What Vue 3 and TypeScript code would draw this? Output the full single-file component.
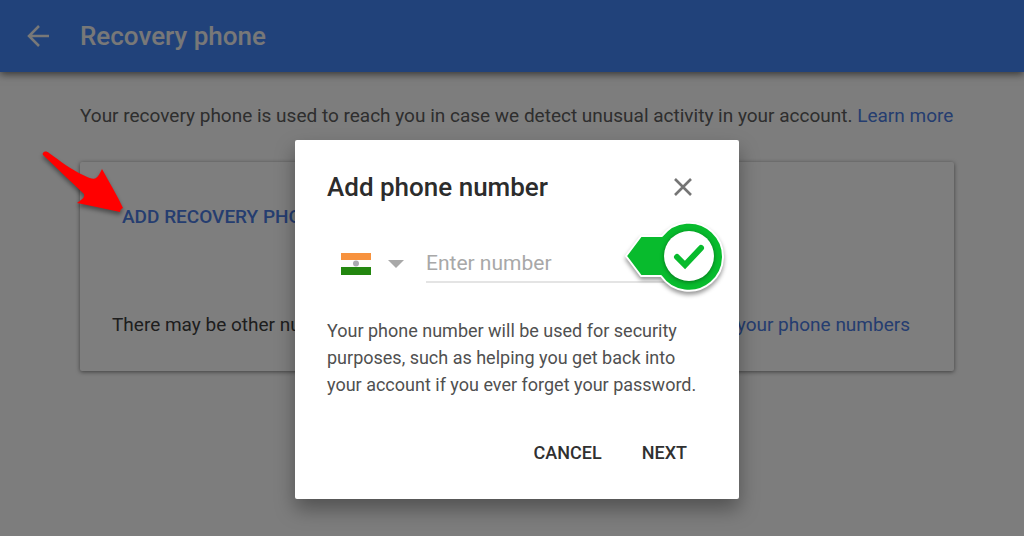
<script setup lang="ts">
import { ref } from 'vue'

const phone = ref('')
</script>

<template>
  <div class="page">
    <header class="bar">
      <button class="icon-button back" type="button" aria-label="Back">
        <svg width="24" height="24" viewBox="0 0 24 24" fill="none" stroke="currentColor" stroke-width="2.500">
          <path d="M23 12H4M13 2 3 12 13 22" />
        </svg>
      </button>
      <h1>Recovery phone</h1>
    </header>

    <main>
      <p class="intro">
        Your recovery phone is used to reach you in case we detect unusual activity in your account.
        <a href="#">Learn more</a>
      </p>
      <section class="card">
        <button class="add" type="button">ADD RECOVERY PHONE</button>
        <div class="others">
          <span>There may be other numbers</span>
          <a href="#">your phone numbers</a>
        </div>
      </section>
    </main>

    <div class="scrim">
      <form class="dialog" role="dialog" aria-labelledby="dialog-title" @submit.prevent>
        <div class="dialog-head">
          <h2 id="dialog-title">Add phone number</h2>
          <button class="icon-button close" type="button" aria-label="Close">
            <svg width="20" height="20" viewBox="0 0 20 20" fill="none" stroke="currentColor" stroke-width="2.600">
              <path d="M2 2 18 18M18 2 2 18" />
            </svg>
          </button>
        </div>

        <div class="field-row">
          <button class="country" type="button" aria-label="Country: India">
            <svg width="30" height="22" viewBox="0 0 30 22">
              <rect width="30" height="22" fill="#fcfcfc" />
              <rect width="30" height="7" fill="#f7923e" />
              <rect y="14" width="30" height="8" fill="#22860f" />
              <circle cx="15" cy="10.500" r="3" fill="#a9a9b0" />
            </svg>
            <svg width="16" height="8" viewBox="0 0 16 8"><path d="M0 0H16L8 8Z" fill="#a8a8a8" /></svg>
          </button>
          <input v-model="phone" type="tel" placeholder="Enter number" aria-label="Phone number" />
          <svg class="badge" width="112" height="88" viewBox="0 0 112 88" aria-hidden="true">
            <g class="badge-shape">
              <path
                d="M8 44 23 24H44A34 34 0 1 1 43 64H23Z"
                fill="#08bb2d"
                stroke="#fff"
                stroke-width="2"
                stroke-linejoin="round"
              />
            </g>
            <circle class="badge-disc" cx="71" cy="44" r="25" fill="#fff" />
            <path d="M59 45 67 53 83 36" fill="none" stroke="#08bb2d" stroke-width="6" stroke-linecap="round" />
          </svg>
        </div>

        <p class="note">
          Your phone number will be used for security purposes, such as helping you get back into
          your account if you ever forget your password.
        </p>

        <div class="actions">
          <button type="button">CANCEL</button>
          <button type="submit">NEXT</button>
        </div>
      </form>
    </div>

    <svg class="pointer" width="96" height="80" viewBox="0 0 96 80" aria-hidden="true">
      <path
        d="M9 11C10 9 13 9 15 11C26 19 38 28 49 33C55 36 60 38 62 36C64 35 66 31 68 27C75 40 83 53 89 66C87 67 86 68 86 70C72 67 58 64 43 61C48 57 51 56 50 52C37 40 24 27 10 14C9 13 8 12 9 11Z"
        fill="#f00"
      />
    </svg>
  </div>
</template>

<style>
body {
  margin: 0;
}
</style>

<style scoped>
.page {
  position: relative;
  min-height: 100vh;
  background: #fafafa;
  font-family: Roboto, "Liberation Sans", sans-serif;
  font-size: 19px;
  color: #3c3c3c;
}

h1,
h2,
p {
  margin: 0;
}

button {
  padding: 0;
  border: 0;
  background: none;
  font: inherit;
  color: inherit;
  cursor: pointer;
}

a {
  color: #4a7be0;
  text-decoration: none;
}

svg {
  display: block;
}

.bar {
  display: flex;
  align-items: center;
  gap: 30px;
  height: 72px;
  padding: 0 26px;
  background: #4285f4;
  box-shadow: 0 2px 8px rgba(0, 0, 0, 0.6);
  color: #f0f0f0;
}

h1 {
  font-size: 26px;
  font-weight: 500;
}

main {
  padding: 30px 70px 0 80px;
}

.intro {
  line-height: 28px;
  color: #5c5c5c;
}

.card {
  margin-top: 32px;
  padding: 41px 44px 32px 32px;
  border-radius: 2px;
  background: #fcfcfc;
  box-shadow: 0 1px 4px rgba(0, 0, 0, 0.5);
}

.add {
  display: block;
  margin-left: 10px;
  line-height: 28px;
  font-weight: 500;
  color: #4a7be0;
}

.others {
  display: flex;
  justify-content: space-between;
  margin-top: 80px;
  line-height: 28px;
}

.scrim {
  position: absolute;
  inset: 0;
  display: flex;
  align-items: center;
  justify-content: center;
  padding: 103px 0 0 10px;
  background: rgba(0, 0, 0, 0.5);
}

.dialog {
  box-sizing: border-box;
  width: 444px;
  padding: 32px;
  border-radius: 2px;
  background: #fff;
  box-shadow: 0 10px 20px rgba(0, 0, 0, 0.35);
  font-size: 18px;
}

.dialog-head {
  display: flex;
  align-items: center;
  justify-content: space-between;
  padding-right: 14px;
  line-height: 30px;
  color: #2c2c2c;
}

h2 {
  font-size: 26px;
  font-weight: 500;
}

.close {
  color: #757575;
}

.field-row {
  position: relative;
  display: flex;
  align-items: center;
  margin-top: 43px;
  padding: 0 14px;
}

.country {
  display: flex;
  align-items: center;
  gap: 17px;
}

input {
  flex: 1;
  box-sizing: border-box;
  min-width: 0;
  height: 38px;
  margin-left: 22px;
  padding: 0;
  border: 0;
  border-bottom: 2px solid #e4e4e4;
  background: none;
  font: inherit;
  font-size: 21px;
  color: #333;
  outline: none;
}

input::placeholder {
  color: #a8a8a8;
  opacity: 1;
}

.badge {
  position: absolute;
  top: -33px;
  right: -23px;
}

.badge-shape {
  filter: drop-shadow(0 3px 2px rgba(0, 0, 0, 0.4));
}

.badge-disc {
  filter: drop-shadow(0 1px 2px rgba(0, 0, 0, 0.4));
}

.note {
  margin-top: 34px;
  line-height: 27px;
  color: #505050;
}

.actions {
  display: flex;
  justify-content: flex-end;
  gap: 40px;
  margin-top: 41px;
  padding-right: 20px;
  line-height: 28px;
  font-weight: 500;
  color: #303030;
}

.pointer {
  position: absolute;
  top: 142px;
  left: 34px;
  filter: drop-shadow(0 3px 2px rgba(0, 0, 0, 0.4));
}
</style>
